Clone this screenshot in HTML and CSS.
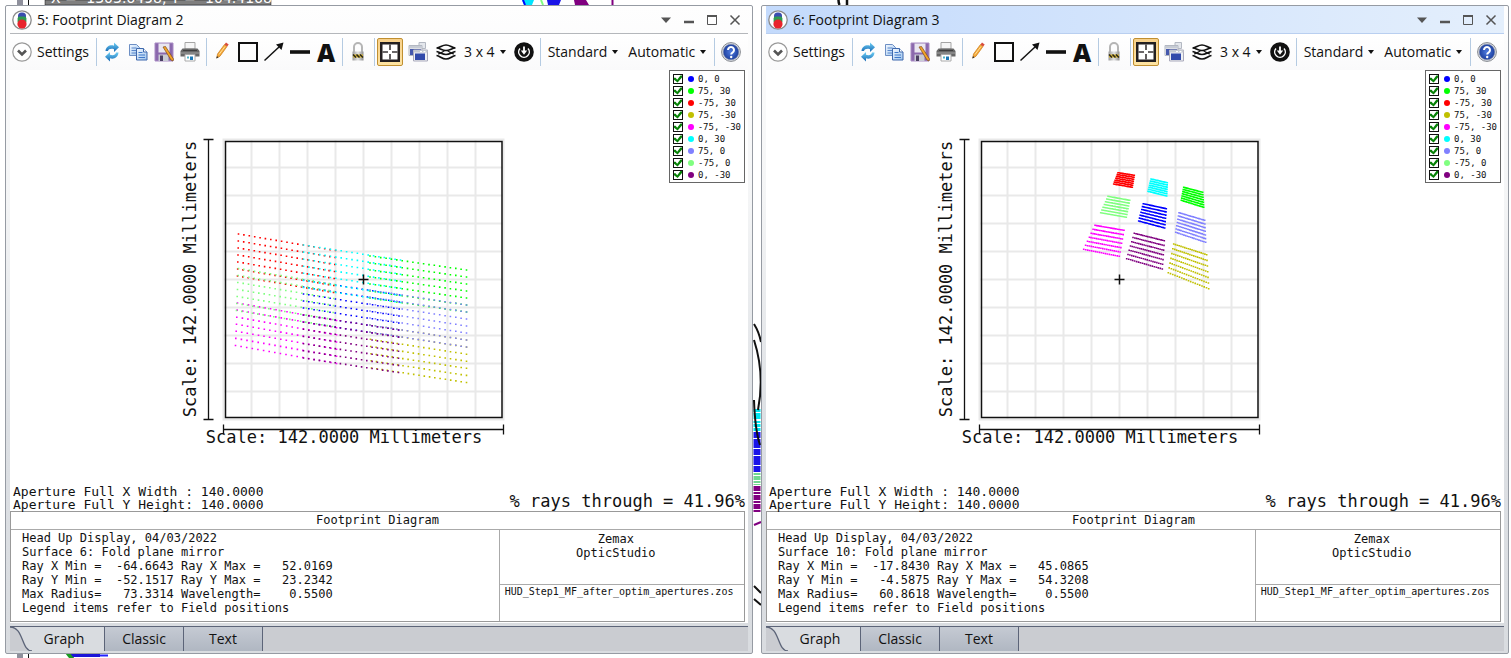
FILE: index.html
```html
<!DOCTYPE html>
<html lang="en">
<head>
<meta charset="utf-8">
<title>Footprint Diagrams</title>
<link rel="stylesheet" href="styles.css">
</head>
<body>
<svg class="defs" aria-hidden="true">
  <defs>
    <linearGradient id="gBlue" x1="0" y1="0" x2="0" y2="1"><stop offset="0" stop-color="#6fd0f5"/><stop offset="1" stop-color="#1668b4"/></linearGradient>
    <linearGradient id="gPage" x1="0" y1="0" x2="1" y2="1"><stop offset="0" stop-color="#f4f9ff"/><stop offset="1" stop-color="#9cc4ee"/></linearGradient>
    <radialGradient id="gHelp"><stop offset="0" stop-color="#4f7ce0"/><stop offset="1" stop-color="#1d3f9e"/></radialGradient>
    <linearGradient id="gLock" x1="0" y1="0" x2="1" y2="0"><stop offset="0" stop-color="#9a9a9a"/><stop offset=".5" stop-color="#e4e4e4"/><stop offset="1" stop-color="#8c8c8c"/></linearGradient>
  </defs>
  <symbol id="app" viewBox="0 0 20 20">
    <circle cx="10" cy="10" r="9.2" fill="#fff" stroke="#8a8a8a" stroke-width="1.3"/>
    <rect x="6" y="2.6" width="8" height="8" rx="3.5" fill="#3a4db0"/>
    <rect x="5.6" y="6.5" width="8.8" height="7" rx="2" fill="#2f9a50"/>
    <circle cx="10" cy="14" r="4.6" fill="#e8242c"/>
  </symbol>
  <symbol id="chev" viewBox="0 0 20 20">
    <circle cx="10" cy="10" r="9.2" fill="#fff" stroke="#999" stroke-width="1.2"/>
    <path d="M6 8.5l4 4 4-4" fill="none" stroke="#555" stroke-width="2.6"/>
  </symbol>
  <symbol id="refresh" viewBox="0 0 20 20">
    <path d="M3.500 9C4 4.500 8 2.500 12 3.700V.500L17 5.300 12 10V7.200C9 6.200 6.500 7 6 9z" fill="url(#gBlue)"/>
    <path d="M16.500 10.500C16 15.500 12 17.500 8 16.300V19.500L3 14.700 8 10V12.800C11 13.800 13.500 13 14 10.500z" fill="url(#gBlue)"/>
  </symbol>
  <symbol id="copy" viewBox="0 0 20 20">
    <path d="M1.500 2.500h7l3 3v8h-10z" fill="url(#gPage)" stroke="#6d8fc4"/>
    <path d="M3.500 6h5M3.500 8.500h5M3.500 11h5" stroke="#5a87cb"/>
    <path d="M8.500 6.500h7l3.500 3.500v8H8.500z" fill="url(#gPage)" stroke="#3f69ad"/>
    <path d="M15.500 6.500V10H19" fill="#fff" stroke="#3f69ad"/>
    <path d="M10.500 10.500h4M10.500 13h6.500M10.500 15.500h6.500" stroke="#3f78c8"/>
  </symbol>
  <symbol id="save" viewBox="0 0 20 20">
    <path d="M1 1h18v18H1z" fill="#8b69ad" stroke="#a98cc4"/>
    <path d="M4.500 1.500h11v9h-11z" fill="#e9e6f0"/>
    <path d="M4.500 12.500h10v6.500h-10z" fill="#c9cbd4"/><path d="M6 13.500h3V19H6z" fill="#4b3f63"/>
    <path d="M9 5l2.500-.500 8 12.500-.500 2-2-1z" fill="#f3a428" stroke="#7c4a1c" stroke-width=".7"/>
  </symbol>
  <symbol id="print" viewBox="0 0 20 20">
    <path d="M5 .500h10V7H5z" fill="#f6f6f6" stroke="#a5a5a5"/>
    <path d="M2.500 6.500h15L19.500 9v5.500h-19V9z" fill="#676767"/>
    <path d="M1 11h18" stroke="#a5a5a5"/><path d="M3 8.500h14" stroke="#3e3e3e"/>
    <path d="M5 12.500h10v6.500H5z" fill="#fff" stroke="#aaa"/>
    <path d="M10 14.500h3v3.500h-3z" fill="#1e78b6"/><path d="M7 14.500h2v2H7z" fill="#52b4c8"/>
  </symbol>
  <symbol id="pencil" viewBox="0 0 20 20">
    <path d="M5.500 12L12.500 2.500l2.500 2L8 14.200 4.800 16z" fill="#f5a938" stroke="#c87818" stroke-width=".7"/>
    <path d="M12.500 2.500l1.500-2 2.700 2-1.500 2z" fill="#d94c3c"/><path d="M5 14l-.8 2.600 2.300-1.200z" fill="#333"/>
    <path d="M7 12.500l6-8" stroke="#ffe09a"/>
  </symbol>
  <symbol id="rect" viewBox="0 0 20 20"><path d="M1 1h18v18H1z" fill="none" stroke="#111" stroke-width="2"/></symbol>
  <symbol id="arrow" viewBox="0 0 20 20"><path d="M.500 18.500L15 5" stroke="#111" stroke-width="1.500"/><path d="M19.500.500l-2 7.500-5.500-5.500z" fill="#111"/></symbol>
  <symbol id="line" viewBox="0 0 20 20"><path d="M0 10h20" stroke="#111" stroke-width="3.600"/></symbol>
  <symbol id="lock" viewBox="0 0 20 20">
    <path d="M6 10V5a4 4 0 0 1 8 0V10" fill="none" stroke="#b5b5b5" stroke-width="2"/>
    <path d="M4.500 9.500h11v9h-11z" fill="url(#gLock)"/>
    <path d="M5 12.500h10v3H5z" fill="#d8b62c"/><path d="M5 12.500l3 3M8.500 12.500l3 3M12 12.500l3 3" stroke="#29251a" stroke-width="1.500"/>
  </symbol>
  <symbol id="fit" viewBox="0 0 20 20">
    <path d="M0 0h20v20H0z" fill="#231f20"/><path d="M2.500 2.500h15v15h-15z" fill="#fff"/>
    <path d="M10 2.500V8M10 12v5.500M2.500 10H8M12 10h5.500" stroke="#3a3637" stroke-width="1.600"/>
  </symbol>
  <symbol id="windows" viewBox="0 0 20 20">
    <path d="M11 .500h6.500v6H11z" fill="#e4e7ec" stroke="#b3b8c2"/><path d="M1 3.500h13v10H1z" fill="#f4f4f4" stroke="#b3b8c2"/>
    <path d="M1 4h13v2.500H1z" fill="#c6cbd4"/><path d="M2 7h11v6H2z" fill="#4458ad"/>
    <path d="M5.500 8h14v11h-14z" fill="#eef0f4" stroke="#aab"/><path d="M5.500 8h14v2.500h-14z" fill="#c4c9d2"/>
    <path d="M7 11.500h10v6.500H7z" fill="#324bab"/><path d="M15.500 9.500h2M12 9.500h2" stroke="#fff"/>
  </symbol>
  <symbol id="layers" viewBox="0 0 20 20">
    <g fill="none" stroke="#111" stroke-width="1.700">
      <path d="M.500 6C4 6 6 3 10 3s6 3 9.500 3C16 6 14 8.500 10 8.500S4 6 .500 6z"/>
      <path d="M.500 9.500C4 10 6 12.500 10 12.500s6-2.500 9.500-3"/>
      <path d="M.500 13.500C4 14 6 17 10 17s6-3 9.500-3.500"/>
      <path d="M2 12c4-.500 5-3.500 8-3.500s4 3 8 3.500" stroke-width="1.200"/>
    </g>
  </symbol>
  <symbol id="power" viewBox="0 0 20 20">
    <circle cx="10" cy="10" r="9.800" fill="#111"/><path d="M6 6.500a5.300 5.300 0 1 0 8 0" fill="none" stroke="#fff" stroke-width="1.500"/>
    <path d="M10 4.500v5" stroke="#fff" stroke-width="1.800"/><path d="M6.800 8.500h6.400L10 12.800z" fill="#fff"/>
  </symbol>
  <symbol id="help" viewBox="0 0 20 20">
    <circle cx="10" cy="10" r="9.400" fill="#dfe2e8" stroke="#85888e"/><circle cx="10" cy="10" r="7.800" fill="url(#gHelp)" stroke="#7f8ba8" stroke-width=".6"/>
    <path d="M7 8a3 3 0 1 1 4.500 2.600Q10.200 11.300 10.200 12.500" fill="none" stroke="#fff" stroke-width="2"/><circle cx="10.200" cy="15" r="1.200" fill="#fff"/>
  </symbol>
  <symbol id="wmenu" viewBox="0 0 12 12"><path d="M1 3.500h10L6 9z" fill="#555"/></symbol>
  <symbol id="wmin" viewBox="0 0 12 12"><path d="M1 8h10" stroke="#555" stroke-width="2.500"/></symbol>
  <symbol id="wmax" viewBox="0 0 12 12"><path d="M1.500 2h9v8.500h-9z" fill="none" stroke="#555"/><path d="M1 2h10" stroke="#555" stroke-width="2"/></symbol>
  <symbol id="wclose" viewBox="0 0 12 12"><path d="M1.500 1.500l9 9M10.500 1.500l-9 9" stroke="#555" stroke-width="1.500"/></symbol>
  <symbol id="frame" viewBox="175 135 405 315">
    <path d="M223.500 139.500h280v280h-280zM251.500 139v281M279.500 139v281M307.500 139v281M335.500 139v281M363.500 139v281M391.500 139v281M419.500 139v281M447.500 139v281M475.500 139v281M223 167.500h281M223 195.500h281M223 223.500h281M223 251.500h281M223 279.500h281M223 307.500h281M223 335.500h281M223 363.500h281M223 391.500h281" fill="none" stroke="#e9e9e9" stroke-width="2"/>
    <path d="M225.500 141.500h276.500v276h-276.500z" fill="none" stroke="#111" stroke-width="1.500"/>
    <path d="M208.500 139.500v280M203.500 139.500h10M203.500 419.500h10M223.500 429.500h280M223.500 424.500v10M503.500 424.500v10" stroke="#111" stroke-width="1.300"/>
  </symbol>
  <symbol id="edge" viewBox="0 0 24 24" preserveAspectRatio="none"><path d="M0 0C14 0 11 24 22 24H24V0z" fill="#d9dce0"/><path d="M0 0C14 0 11 24 22 24" fill="none" stroke="#5c6478" stroke-width="1.300"/></symbol>
</svg>

<svg class="backdrop" width="1511" height="658" aria-hidden="true">
  <path d="M17 0h6v658h-6z" fill="#8f909c"/><path d="M28.500 0v658" stroke="#111"/>
  <path d="M45 0h226v5H45z" fill="#7f7f7f" stroke="#111" stroke-width=".5"/>
  <text class="readout" x="51" y="3">X = -1303.6498, Y = -104.4168</text>
  <path d="M522 0h12l-2 5h-8z" fill="#00e5ff"/><path d="M523 0l2 5" stroke="#00f" stroke-width="2"/><path d="M541 0l2 5" stroke="#80ff80" stroke-width="2"/>
  <path d="M547 0h14l-2 5h-11z" fill="#1a14e8"/><path d="M574 0h12l3 5h-14z" fill="#800080"/><path d="M612.500 0v5" stroke="#800080" stroke-width="2"/>
  <path d="M838.500 0q0 3 1 5M847 0v5" stroke="#111" stroke-width="2.500"/>
  <path d="M757 409v22" stroke="#00e5f0" stroke-width="7" stroke-dasharray="3 1 6 2 2 1"/>
  <path d="M757 432v41" stroke="#1a14e8" stroke-width="7" stroke-dasharray="6 1 9 1"/>
  <path d="M757 473v12" stroke="#70d890" stroke-width="7" stroke-dasharray="2 1 4 1"/>
  <path d="M757 486v26" stroke="#800080" stroke-width="7" stroke-dasharray="5 1 2 1"/>
  <path d="M754 324q5 8 7 18M754 340q11 34 4 70M754 400q1 30 6 45" fill="none" stroke="#111" stroke-width="2"/>
  <path d="M754 525l7-3" stroke="#800080" stroke-width="2"/>
  <path d="M754 586l7 7M754 599l7 6" stroke="#111" stroke-width="2"/>
  <path d="M65 653h7l2 5h-5z" fill="#1a9a20"/><path d="M70 653h30v4H73z" fill="#1a14d8"/><path d="M100 655.500h8" stroke="#22f" stroke-width="2"/>
</svg>

<main class="desktop">
  <section class="window" aria-label="Footprint Diagram 2">
    <header class="titlebar">
      <svg class="icon"><use href="#app"/></svg>
      <h1 class="title">5: Footprint Diagram 2</h1>
      <button class="win-btn" aria-label="Window menu"><svg><use href="#wmenu"/></svg></button>
      <button class="win-btn" aria-label="Minimize"><svg><use href="#wmin"/></svg></button>
      <button class="win-btn" aria-label="Maximize"><svg><use href="#wmax"/></svg></button>
      <button class="win-btn" aria-label="Close"><svg><use href="#wclose"/></svg></button>
    </header>
    <div class="toolbar">
      <button class="settings"><svg class="icon"><use href="#chev"/></svg>Settings</button>
      <span class="sep"></span>
      <button class="tool" aria-label="Refresh"><svg class="icon"><use href="#refresh"/></svg></button>
      <button class="tool" aria-label="Copy"><svg class="icon"><use href="#copy"/></svg></button>
      <button class="tool" aria-label="Save"><svg class="icon"><use href="#save"/></svg></button>
      <button class="tool" aria-label="Print"><svg class="icon"><use href="#print"/></svg></button>
      <span class="sep"></span>
      <button class="tool" aria-label="Draw"><svg class="icon"><use href="#pencil"/></svg></button>
      <button class="tool" aria-label="Rectangle"><svg class="icon"><use href="#rect"/></svg></button>
      <button class="tool" aria-label="Arrow"><svg class="icon"><use href="#arrow"/></svg></button>
      <button class="tool" aria-label="Line"><svg class="icon"><use href="#line"/></svg></button>
      <button class="tool letter" aria-label="Annotate">A</button>
      <span class="sep"></span>
      <button class="tool" aria-label="Lock"><svg class="icon"><use href="#lock"/></svg></button>
      <span class="sep"></span>
      <button class="tool active" aria-label="Fit"><svg class="icon"><use href="#fit"/></svg></button>
      <button class="tool spaced" aria-label="Windows"><svg class="icon"><use href="#windows"/></svg></button>
      <button class="tool spaced" aria-label="Layers"><svg class="icon"><use href="#layers"/></svg></button>
      <button class="drop">3 x 4</button>
      <button class="tool" aria-label="Reset"><svg class="icon"><use href="#power"/></svg></button>
      <span class="sep"></span>
      <button class="drop">Standard</button>
      <button class="drop">Automatic</button>
      <span class="sep"></span>
      <button class="tool help" aria-label="Help"><svg class="icon"><use href="#help"/></svg></button>
    </div>
    <div class="content">
      <ul class="legend"></ul>
      <svg class="plot" viewBox="175 135 405 315" role="img" aria-label="Footprint plot">
        <use href="#frame" x="175" y="135" width="405" height="315"/>
        <g class="points" data-plot="fold6"></g>
        <path class="cross" d="M358.500 279.500h10M363.500 274.500v10"/>
        <text class="scale" x="344" y="443">Scale: 142.0000 Millimeters</text>
        <text class="scale" transform="translate(196 279) rotate(-90)">Scale: 142.0000 Millimeters</text>
      </svg>
      <div class="summary">
        <pre class="aperture">Aperture Full X Width : 140.0000
Aperture Full Y Height: 140.0000</pre>
        <p class="through">% rays through = 41.96%</p>
      </div>
      <div class="report">
        <h2 class="report-title">Footprint Diagram</h2>
        <pre class="report-data">Head Up Display, 04/03/2022
Surface 6: Fold plane mirror
Ray X Min =  -64.6643 Ray X Max =   52.0169
Ray Y Min =  -52.1517 Ray Y Max =   23.2342
Max Radius=   73.3314 Wavelength=    0.5500
Legend items refer to Field positions</pre>
        <p class="brand">Zemax<br>OpticStudio</p>
        <p class="file">HUD_Step1_MF_after_optim_apertures.zos</p>
      </div>
    </div>
    <nav class="tabs">
      <svg class="edge"><use href="#edge"/></svg>
      <button class="tab current">Graph</button>
      <button class="tab">Classic</button>
      <button class="tab">Text</button>
    </nav>
  </section>

  <section class="window focused" aria-label="Footprint Diagram 3">
    <header class="titlebar">
      <svg class="icon"><use href="#app"/></svg>
      <h1 class="title">6: Footprint Diagram 3</h1>
      <button class="win-btn" aria-label="Window menu"><svg><use href="#wmenu"/></svg></button>
      <button class="win-btn" aria-label="Minimize"><svg><use href="#wmin"/></svg></button>
      <button class="win-btn" aria-label="Maximize"><svg><use href="#wmax"/></svg></button>
      <button class="win-btn" aria-label="Close"><svg><use href="#wclose"/></svg></button>
    </header>
    <div class="toolbar">
      <button class="settings"><svg class="icon"><use href="#chev"/></svg>Settings</button>
      <span class="sep"></span>
      <button class="tool" aria-label="Refresh"><svg class="icon"><use href="#refresh"/></svg></button>
      <button class="tool" aria-label="Copy"><svg class="icon"><use href="#copy"/></svg></button>
      <button class="tool" aria-label="Save"><svg class="icon"><use href="#save"/></svg></button>
      <button class="tool" aria-label="Print"><svg class="icon"><use href="#print"/></svg></button>
      <span class="sep"></span>
      <button class="tool" aria-label="Draw"><svg class="icon"><use href="#pencil"/></svg></button>
      <button class="tool" aria-label="Rectangle"><svg class="icon"><use href="#rect"/></svg></button>
      <button class="tool" aria-label="Arrow"><svg class="icon"><use href="#arrow"/></svg></button>
      <button class="tool" aria-label="Line"><svg class="icon"><use href="#line"/></svg></button>
      <button class="tool letter" aria-label="Annotate">A</button>
      <span class="sep"></span>
      <button class="tool" aria-label="Lock"><svg class="icon"><use href="#lock"/></svg></button>
      <span class="sep"></span>
      <button class="tool active" aria-label="Fit"><svg class="icon"><use href="#fit"/></svg></button>
      <button class="tool spaced" aria-label="Windows"><svg class="icon"><use href="#windows"/></svg></button>
      <button class="tool spaced" aria-label="Layers"><svg class="icon"><use href="#layers"/></svg></button>
      <button class="drop">3 x 4</button>
      <button class="tool" aria-label="Reset"><svg class="icon"><use href="#power"/></svg></button>
      <span class="sep"></span>
      <button class="drop">Standard</button>
      <button class="drop">Automatic</button>
      <span class="sep"></span>
      <button class="tool help" aria-label="Help"><svg class="icon"><use href="#help"/></svg></button>
    </div>
    <div class="content">
      <ul class="legend"></ul>
      <svg class="plot" viewBox="175 135 405 315" role="img" aria-label="Footprint plot">
        <use href="#frame" x="175" y="135" width="405" height="315"/>
        <g class="points" data-plot="fold10"></g>
        <path class="cross" d="M358.500 279.500h10M363.500 274.500v10"/>
        <text class="scale" x="344" y="443">Scale: 142.0000 Millimeters</text>
        <text class="scale" transform="translate(196 279) rotate(-90)">Scale: 142.0000 Millimeters</text>
      </svg>
      <div class="summary">
        <pre class="aperture">Aperture Full X Width : 140.0000
Aperture Full Y Height: 140.0000</pre>
        <p class="through">% rays through = 41.96%</p>
      </div>
      <div class="report">
        <h2 class="report-title">Footprint Diagram</h2>
        <pre class="report-data">Head Up Display, 04/03/2022
Surface 10: Fold plane mirror
Ray X Min =  -17.8430 Ray X Max =   45.0865
Ray Y Min =   -4.5875 Ray Y Max =   54.3208
Max Radius=   60.8618 Wavelength=    0.5500
Legend items refer to Field positions</pre>
        <p class="brand">Zemax<br>OpticStudio</p>
        <p class="file">HUD_Step1_MF_after_optim_apertures.zos</p>
      </div>
    </div>
    <nav class="tabs">
      <svg class="edge"><use href="#edge"/></svg>
      <button class="tab current">Graph</button>
      <button class="tab">Classic</button>
      <button class="tab">Text</button>
    </nav>
  </section>
</main>
<script src="plots.js"></script>
</body>
</html>
```
FILE: plots.js
```js
// Field positions with their plot colours, in legend order.
const fields = [
  ["0, 0", "#0000ff"], ["75, 30", "#00ff00"], ["-75, 30", "#ff0000"],
  ["75, -30", "#c0c000"], ["-75, -30", "#ff00ff"], ["0, 30", "#00ffff"],
  ["75, 0", "#8080ff"], ["-75, 0", "#80ff80"], ["0, -30", "#800080"]
];

// Corners of each field's ray bundle: top left, top right, bottom left, bottom right.
const plots = {
  fold6: [
    [303.5, 280, 399.5, 295, 303.5, 322, 398.5, 337],
    [370, 256, 466.5, 270, 370, 298, 466.5, 312],
    [238.5, 234, 335.5, 250.5, 237.5, 276, 333.5, 292.5],
    [370, 325, 466.5, 340, 371.5, 368, 466.5, 382.5],
    [237.5, 303, 336.5, 320.5, 235.5, 345.5, 336.5, 363.5],
    [303.5, 245, 400.5, 260, 303.5, 287.5, 400.5, 302.5],
    [370, 290, 466.5, 305, 370, 332, 466.5, 347],
    [238.5, 268.5, 334.5, 284.5, 236.5, 310.5, 332.5, 326.5],
    [303.5, 315, 398.5, 330, 303.5, 358, 398.5, 372.5]
  ],
  fold10: [
    [387.3, 203.7, 410.3, 208.7, 382.7, 221, 408.7, 228],
    [427.7, 187.3, 446.7, 192.3, 425.3, 200.3, 447.7, 207.3],
    [362, 172.7, 378.3, 175.3, 357.7, 184, 376.3, 187.3],
    [417.7, 244, 450.7, 254.7, 412.3, 272.7, 452.7, 288.7],
    [339, 225.3, 368, 230.3, 327.7, 249.3, 363.3, 256.3],
    [395, 179, 411.3, 182.7, 392, 191.3, 410.7, 196],
    [423, 212.7, 448.7, 220.3, 419.7, 232.3, 449.7, 242.3],
    [352, 196.3, 373.7, 200.3, 344.7, 212.7, 370.3, 217.3],
    [378.3, 233.3, 408.3, 240.7, 370.7, 258.7, 406.3, 269]
  ]
};

const ROWS = 7;
const COLS = 19;
const mix = (a, b, t) => a + (b - a) * t;

function bundlePath([ax, ay, bx, by, cx, cy, dx, dy]) {
  let d = "";
  for (let r = 0; r < ROWS; r++) {
    const v = r / (ROWS - 1);
    for (let c = 0; c < COLS; c++) {
      const u = c / (COLS - 1);
      const x = mix(mix(ax, bx, u), mix(cx, dx, u), v);
      const y = mix(mix(ay, by, u), mix(cy, dy, u), v);
      d += `M${(x - 0.8).toFixed(1)} ${y.toFixed(1)}h1.6`;
    }
  }
  return d;
}

document.querySelectorAll(".points").forEach(group => {
  plots[group.dataset.plot].forEach((corners, i) => {
    const path = document.createElementNS("http://www.w3.org/2000/svg", "path");
    path.setAttribute("d", bundlePath(corners));
    path.setAttribute("stroke", fields[i][1]);
    group.append(path);
  });
});

document.querySelectorAll(".legend").forEach(list => {
  for (const [name, color] of fields) {
    const item = document.createElement("li");
    item.innerHTML = `<label class="field"><input type="checkbox" checked><span class="dot" style="background:${color}"></span>${name}</label>`;
    list.append(item);
  }
});
```
FILE: styles.css
```css
* { box-sizing: border-box; }
body { margin: 0; background: #fff; color: #111; font: 14px/20px "Open Sans", "Noto Sans", sans-serif; }
h1, h2, p, pre, ul { margin: 0; padding: 0; font-weight: 400; }
button { border: 0; padding: 0; background: none; color: inherit; font: inherit; }
svg { display: block; flex: none; }
.defs { position: absolute; width: 0; height: 0; }
.backdrop { position: absolute; left: 0; top: 0; z-index: -1; }
.readout { fill: #fff; font: 14px "DejaVu Sans", sans-serif; }
.desktop { display: flex; gap: 8px; padding: 5px 2px 4px 5px; }
.window {
  flex: 1; min-width: 0; padding: 0 4px 2px;
  border: 1px solid #969ba3; border-radius: 2px;
  background: linear-gradient(#fefefe, #f4f5f6 30%, #dde0e4 65%, #d9dce0);
}
.icon { width: 20px; height: 20px; }

.titlebar { display: flex; align-items: center; height: 28px; padding: 0 2px; border-bottom: 1px solid #b4b7bb; }
.focused .titlebar { background: linear-gradient(90deg, #c3dafc, #e4effc); border-color: #b9cff0; }
.title { flex: 1; margin-left: 5px; font-size: 14px; }
.win-btn { width: 23px; height: 24px; display: grid; place-items: center; }
.win-btn svg { width: 12px; height: 12px; }

.toolbar { display: flex; align-items: center; height: 36px; padding-left: 2px; background: linear-gradient(#fff, #fafafb); }
.settings { display: flex; align-items: center; gap: 5px; width: 81px; white-space: nowrap; }
.sep { flex: none; width: 1px; height: 28px; margin: 0 2px 0 3px; background: #b5cbe2; }
.tool { flex: none; display: grid; place-items: center; width: 26px; height: 28px; }
.active { border: 1px solid #c08f30; border-radius: 2px; background: linear-gradient(#f7d08a, #fde3a2); }
.spaced { margin-left: 2px; }
.letter { font: 900 25px/28px "Open Sans", sans-serif; }
.drop { display: flex; align-items: center; gap: 5px; padding: 0 5px; white-space: nowrap; }
.drop::after { content: ""; border: 3px solid transparent; border-top: 4px solid #111; border-bottom: 0; }
.help { margin-left: auto; margin-right: 4px; }

.content { position: relative; padding: 65px 3px 1px 0; background: #fff; font-family: "DejaVu Sans Mono", monospace; }
.plot { width: 405px; height: 315px; margin: 0 auto; }
.points { stroke-width: 1.6; }
.cross { stroke: #111; stroke-width: 1.5; }
.scale { font-size: 17px; text-anchor: middle; fill: #111; }
.legend { position: absolute; top: 0; right: 3px; width: 76px; padding: 2px 3px; border: 1px solid #666; background: #fff; list-style: none; }
.field { display: flex; align-items: center; height: 12px; font-size: 9px; line-height: 12px; white-space: nowrap; }
.legend li:last-child .field { height: 11px; }
.field input { flex: none; appearance: none; width: 10px; height: 10px; margin: 0; border: 1px solid #111; background: #fff; display: grid; place-items: center; }
.field input::before { content: ""; width: 8px; height: 8px; background: #078207; clip-path: polygon(0 35%, 20% 35%, 40% 60%, 80% 5%, 100% 5%, 100% 30%, 45% 95%, 0 60%); }
.dot { width: 6px; height: 6px; margin: 0 4px 0 5px; border-radius: 50%; }
.summary { display: flex; justify-content: space-between; align-items: flex-end; margin-top: 35px; padding-left: 3px; }
.aperture { font: 13px/13px "DejaVu Sans Mono", monospace; }
.through { font-size: 17px; line-height: 20px; }
.report { display: grid; grid-template: 18px 55px 36px / 2fr 1fr; border: 1px solid #999; font-size: 12px; }
.report-title { grid-column: 1 / 3; border-bottom: 1px solid #aaa; font-size: 12px; line-height: 16px; text-align: center; }
.report-data { grid-row: 2 / 4; padding: 1px 0 0 11px; border-right: 1px solid #aaa; font: 12px/14px "DejaVu Sans Mono", monospace; }
.brand { padding: 2px 12px 0 0; border-bottom: 1px solid #aaa; line-height: 14px; text-align: center; }
.file { padding-left: 5px; font-size: 10px; line-height: 14px; }

.tabs { display: flex; height: 25px; margin-top: 3px; border-top: 1px solid #5c6478; background: #caccd1; }
.tab { width: 79px; border-right: 1px solid #5c6478; background: linear-gradient(#c5cad3, #b0b7c2); }
.edge { width: 24px; height: 24px; }
.current { width: 71px; padding-right: 10px; background: #d9dce0; }
```
